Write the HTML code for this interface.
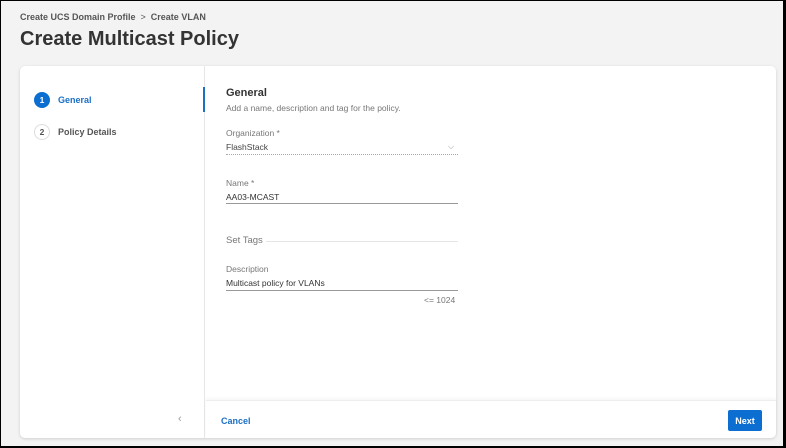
<!DOCTYPE html>
<html><head><style>
*{box-sizing:border-box;margin:0;padding:0}
body{width:786px;height:448px;overflow:hidden;font-family:"Liberation Sans",sans-serif;background:#fff}
.frame{position:absolute;left:0;top:0;width:786px;height:448px;border:1px solid #000;border-right:3px solid #000;border-bottom:2px solid #000;background:#f3f3f3}
.bc{position:absolute;left:19px;top:11px;font-size:9px;color:#555;font-weight:bold}
h1{position:absolute;left:19px;top:27px;font-size:20px;color:#333;font-weight:bold}
.card{position:absolute;left:19px;top:65px;width:756px;height:372px;background:#fff;border-radius:5px;box-shadow:0 1px 3px rgba(0,0,0,.15)}
.side{position:absolute;left:0;top:0;width:185px;height:372px;border-right:1px solid #e6e6e6}
.step{position:absolute;left:14px;display:flex;align-items:center;font-size:9px;font-weight:bold;color:#555}
.num{width:16px;height:16px;border-radius:50%;border:1.5px solid #ddd;font-size:8.5px;display:flex;align-items:center;justify-content:center;margin-right:8px;color:#555}
.act .num{background:#0b6ed0;border-color:#0b6ed0;color:#fff}
.act{color:#1b6fc6}
.bar{position:absolute;left:183px;top:21px;width:2px;height:25px;background:#1b6fc6}
.main{position:absolute;left:206px;top:21px;font-size:8.5px;color:#777}
.t{position:absolute;white-space:nowrap}
.line{position:absolute;left:0;width:232px;height:0}
.foot{position:absolute;left:186px;top:334px;width:570px;height:38px;border-top:1px solid #eee;box-shadow:0 -2px 3px rgba(0,0,0,.04)}
.btn{position:absolute;right:14px;top:9px;width:34px;height:21px;background:#0b6ed0;color:#fff;font-size:9px;font-weight:bold;border-radius:2px;display:flex;align-items:center;justify-content:center}
</style></head><body>
<div class="frame">
<div class="bc">Create UCS Domain Profile &nbsp;<span style="font-weight:normal">&gt;</span>&nbsp; Create VLAN</div>
<h1>Create Multicast Policy</h1>
<div class="card">
 <div class="side">
  <div class="step act" style="top:26px"><div class="num">1</div>General</div>
  <div class="step" style="top:58px"><div class="num">2</div>Policy Details</div>
  <div class="t" style="left:158px;top:347px;font-size:11px;color:#999">‹</div>
 </div>
 <div class="bar"></div>
 <div class="main">
  <div class="t" style="top:0;font-size:11px;font-weight:bold;color:#333">General</div>
  <div class="t" style="top:16px">Add a name, description and tag for the policy.</div>
  <div class="t" style="top:41px">Organization *</div>
  <div class="t" style="top:55px;color:#444">FlashStack</div>
  <div class="t" style="top:55px;left:222px;font-size:8px;color:#999">⌵</div>
  <div class="line" style="top:67px;border-top:1px dotted #aaa"></div>
  <div class="t" style="top:91px">Name *</div>
  <div class="t" style="top:105px;color:#333">AA03-MCAST</div>
  <div class="line" style="top:116px;border-top:1px solid #999"></div>
  <div class="t" style="top:148px;font-size:9.5px">Set Tags</div>
  <div class="line" style="top:154px;border-top:1px solid #e6e6e6;left:40px;width:192px"></div>
  <div class="t" style="top:177px">Description</div>
  <div class="t" style="top:191px;color:#333">Multicast policy for VLANs</div>
  <div class="line" style="top:203px;border-top:1px solid #999"></div>
  <div class="t" style="top:208px;left:198px">&lt;= 1024</div>
 </div>
 <div class="foot">
  <div class="t" style="left:15px;top:15px;font-size:9px;font-weight:bold;color:#1b6fc6">Cancel</div>
  <div class="btn">Next</div>
 </div>
</div>
</div>
</body></html>
